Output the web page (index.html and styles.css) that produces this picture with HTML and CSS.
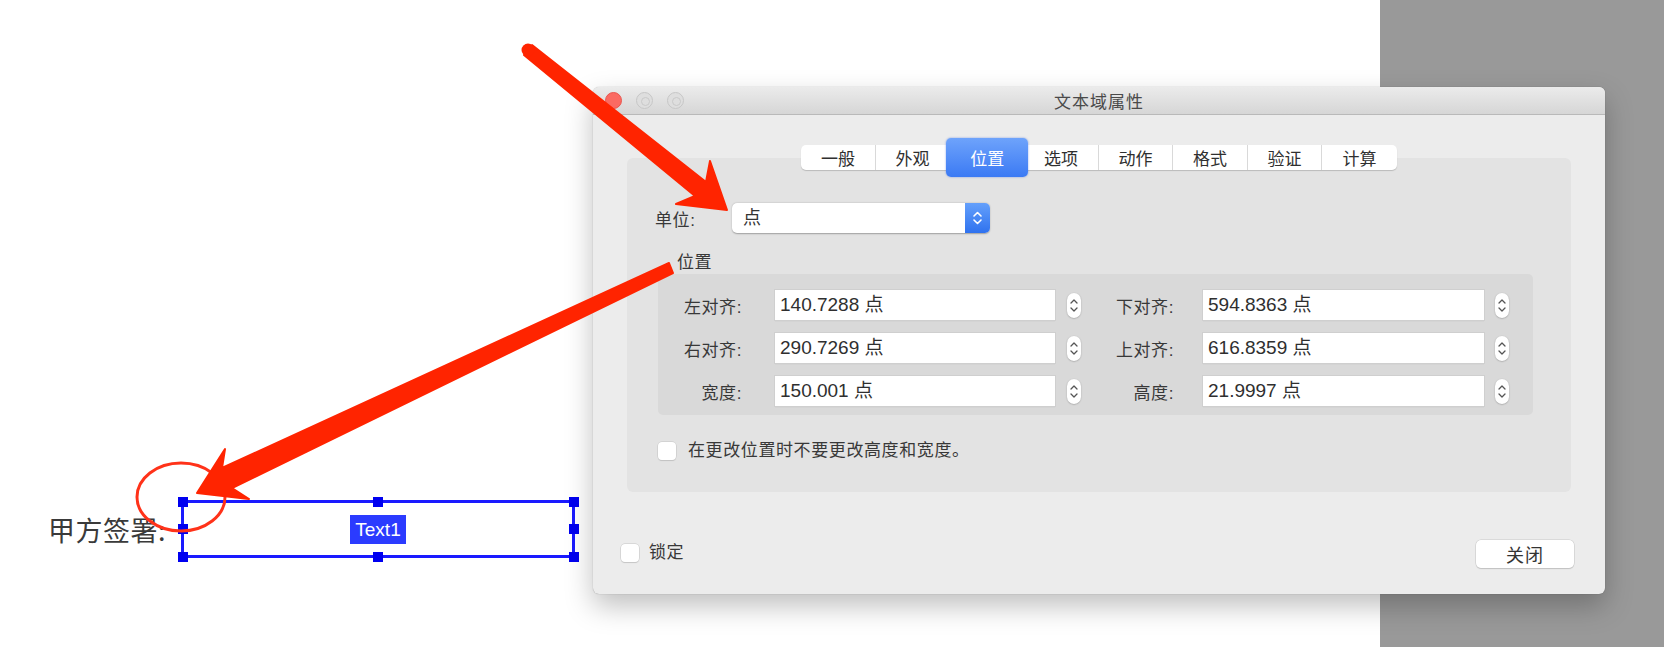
FILE: index.html
```html
<!DOCTYPE html>
<html lang="zh-CN">
<head>
    <meta charset="UTF-8">
    <meta name="viewport" content="width=device-width, initial-scale=1.0">
    <title>文本域属性</title>
    <link rel="stylesheet" href="styles.css">
</head>
<body>
    <div class="desktop">
        <!-- PDF page with the form field -->
        <div class="doc">
            <div class="sign-row">
                <span class="sign-label">甲方签署:</span>
                <div class="text-field">
                    <span class="field-name">Text1</span>
                    <i class="handle tl"></i>
                    <i class="handle tm"></i>
                    <i class="handle tr"></i>
                    <i class="handle ml"></i>
                    <i class="handle mr"></i>
                    <i class="handle bl"></i>
                    <i class="handle bm"></i>
                    <i class="handle br"></i>
                </div>
            </div>
        </div>
        <div class="backdrop"></div>
    </div>

    <!-- Properties window -->
    <div class="dialog">
        <div class="titlebar">
            <div class="lights">
                <span class="light red"></span>
                <span class="light"></span>
                <span class="light"></span>
            </div>
            <div class="title">文本域属性</div>
            <div></div>
        </div>

        <div class="dialog-body">
            <div class="tabs">
                <span class="tab">一般</span>
                <span class="tab">外观</span>
                <span class="tab active">位置</span>
                <span class="tab">选项</span>
                <span class="tab">动作</span>
                <span class="tab">格式</span>
                <span class="tab">验证</span>
                <span class="tab last">计算</span>
            </div>

            <div class="panel">
                <div class="unit-row">
                    <span class="unit-label">单位:</span>
                    <div class="select">
                        <span class="select-value">点</span>
                        <span class="select-btn">
                            <svg width="25" height="30" viewBox="0 0 25 30"><path d="M9 13 L12.5 9.5 L16 13 M9 17 L12.5 20.5 L16 17" fill="none" stroke="#fff" stroke-width="1.6" stroke-linecap="round" stroke-linejoin="round"/></svg>
                        </span>
                    </div>
                </div>

                <div class="group-title">位置</div>
                <div class="group">
                    <div class="field-row">
                        <div class="field">
                            <span class="field-label">左对齐:</span>
                            <div class="input">140.7288 点</div>
                            <span class="stepper"><svg width="14" height="25" viewBox="0 0 14 25"><path d="M4 10 L7 7 L10 10 M4 15 L7 18 L10 15" fill="none" stroke="#555" stroke-width="1.3" stroke-linecap="round" stroke-linejoin="round"/></svg></span>
                        </div>
                        <div class="field right">
                            <span class="field-label">下对齐:</span>
                            <div class="input">594.8363 点</div>
                            <span class="stepper"><svg width="14" height="25" viewBox="0 0 14 25"><path d="M4 10 L7 7 L10 10 M4 15 L7 18 L10 15" fill="none" stroke="#555" stroke-width="1.3" stroke-linecap="round" stroke-linejoin="round"/></svg></span>
                        </div>
                    </div>
                    <div class="field-row">
                        <div class="field">
                            <span class="field-label">右对齐:</span>
                            <div class="input">290.7269 点</div>
                            <span class="stepper"><svg width="14" height="25" viewBox="0 0 14 25"><path d="M4 10 L7 7 L10 10 M4 15 L7 18 L10 15" fill="none" stroke="#555" stroke-width="1.3" stroke-linecap="round" stroke-linejoin="round"/></svg></span>
                        </div>
                        <div class="field right">
                            <span class="field-label">上对齐:</span>
                            <div class="input">616.8359 点</div>
                            <span class="stepper"><svg width="14" height="25" viewBox="0 0 14 25"><path d="M4 10 L7 7 L10 10 M4 15 L7 18 L10 15" fill="none" stroke="#555" stroke-width="1.3" stroke-linecap="round" stroke-linejoin="round"/></svg></span>
                        </div>
                    </div>
                    <div class="field-row">
                        <div class="field">
                            <span class="field-label">宽度:</span>
                            <div class="input">150.001 点</div>
                            <span class="stepper"><svg width="14" height="25" viewBox="0 0 14 25"><path d="M4 10 L7 7 L10 10 M4 15 L7 18 L10 15" fill="none" stroke="#555" stroke-width="1.3" stroke-linecap="round" stroke-linejoin="round"/></svg></span>
                        </div>
                        <div class="field right">
                            <span class="field-label">高度:</span>
                            <div class="input">21.9997 点</div>
                            <span class="stepper"><svg width="14" height="25" viewBox="0 0 14 25"><path d="M4 10 L7 7 L10 10 M4 15 L7 18 L10 15" fill="none" stroke="#555" stroke-width="1.3" stroke-linecap="round" stroke-linejoin="round"/></svg></span>
                        </div>
                    </div>
                </div>

                <label class="check-row">
                    <span class="checkbox"></span>
                    <span>在更改位置时不要更改高度和宽度。</span>
                </label>
            </div>

            <div class="footer">
                <label class="check-row lock">
                    <span class="checkbox"></span>
                    <span>锁定</span>
                </label>
                <button class="btn">关闭</button>
            </div>
        </div>
    </div>

    <!-- Annotations drawn on top of the screenshot -->
    <svg class="marks" width="1664" height="647" viewBox="0 0 1664 647">
        <ellipse cx="181" cy="497" rx="44" ry="34" fill="none" stroke="#ff3219" stroke-width="3"/>
        <polygon points="524,55 695,196 676,204 727,210 710,161 706,182 532,45" fill="#ff2400" stroke="#ff2400" stroke-width="2" stroke-linejoin="round"/>
        <circle cx="528" cy="50" r="6.5" fill="#ff2400"/>
        <polygon points="673,273 232,488 249,499 197,493 225,449 222,468 669,263" fill="#ff2400" stroke="#ff2400" stroke-width="2" stroke-linejoin="round"/>
    </svg>
</body>
</html>
```

FILE: styles.css
```css
/* Global */
* {
    box-sizing: border-box;
}

html, body {
    margin: 0;
    padding: 0;
}

body {
    font-family: "Liberation Sans", "Noto Sans CJK SC", sans-serif;
    color: #333;
    width: 1664px;
    height: 647px;
    overflow: hidden;
    position: relative;
}

.desktop {
    display: flex;
    height: 647px;
}

/* Document page */
.doc {
    flex: 1;
    background: #fff;
    padding: 500px 0 0 48px;
}

.backdrop {
    width: 284px;
    background: #999;
}

.sign-row {
    display: flex;
    align-items: center;
}

.sign-label {
    width: 133px;
    font-size: 27px;
    letter-spacing: 0.5px;
    color: #3a3a3a;
    font-family: "Noto Sans CJK SC", sans-serif;
}

.text-field {
    position: relative;
    width: 394px;
    height: 58px;
    border: 3px solid #1a1aff;
    display: flex;
    align-items: center;
    justify-content: center;
}

.field-name {
    background: #2b3bff;
    color: #fff;
    font-size: 19px;
    line-height: 29px;
    padding: 0 5px;
}

.handle {
    position: absolute;
    width: 10px;
    height: 10px;
    background: #0000f0;
}

.handle.tl { left: -6.5px; top: -6.5px; }
.handle.tm { left: calc(50% - 5px); top: -6.5px; }
.handle.tr { right: -6.5px; top: -6.5px; }
.handle.ml { left: -6.5px; top: calc(50% - 5px); }
.handle.mr { right: -6.5px; top: calc(50% - 5px); }
.handle.bl { left: -6.5px; bottom: -6.5px; }
.handle.bm { left: calc(50% - 5px); bottom: -6.5px; }
.handle.br { right: -6.5px; bottom: -6.5px; }

/* Window */
.dialog {
    position: absolute;
    left: 593px;
    top: 87px;
    width: 1012px;
    background: #ececec;
    border-radius: 6px;
    overflow: hidden;
    box-shadow: 0 12px 28px rgba(0, 0, 0, 0.25), 0 0 1px rgba(0, 0, 0, 0.4);
}

.titlebar {
    height: 28px;
    display: grid;
    grid-template-columns: 1fr auto 1fr;
    align-items: center;
    padding: 0 12px;
    background: linear-gradient(#ebebeb, #d6d6d6);
    border-bottom: 1px solid #b9b9b9;
}

.lights {
    display: flex;
    gap: 14px;
}

.light {
    position: relative;
    width: 17px;
    height: 17px;
    border-radius: 50%;
    background: #dedede;
    border: 1px solid #c6c6c6;
}

.light::after {
    content: "";
    position: absolute;
    left: 4px;
    top: 4px;
    width: 7px;
    height: 7px;
    border-radius: 50%;
    border: 1px solid #c9c9c9;
}

.light.red {
    background: #fb6a62;
    border-color: #e8564f;
}

.light.red::after {
    display: none;
}

.title {
    font-size: 17px;
    color: #4a4a4a;
    letter-spacing: 1px;
}

.dialog-body {
    padding: 30px 34px 26px;
}

/* Tabs */
.tabs {
    position: relative;
    z-index: 1;
    display: flex;
    width: max-content;
    height: 25px;
    margin: 0 auto -12px;
    background: #fff;
    border-radius: 5px;
    box-shadow: 0 1px 1px rgba(0, 0, 0, 0.18);
}

.tab {
    width: 74.5px;
    display: flex;
    align-items: center;
    justify-content: center;
    font-size: 17px;
    color: #2f2f2f;
    border-right: 1px solid #d9d9d9;
}

.tab.last {
    border-right: none;
}

.tab.active {
    width: 82px;
    margin: -7px -4px -7px -4px;
    border: none;
    border-radius: 5px;
    color: #fff;
    background: linear-gradient(#6ea3fb, #3b7af4);
    box-shadow: 0 0 2px rgba(40, 90, 220, 0.6);
}

/* Content panel */
.panel {
    background: #e3e3e3;
    border-radius: 6px;
    padding: 45px 38px 31px 28px;
}

.unit-row {
    display: flex;
    align-items: center;
    height: 30px;
}

.unit-label,
.field-label,
.group-title,
.check-row {
    font-size: 17px;
    color: #383838;
    letter-spacing: 0.6px;
}

.unit-label {
    width: 77px;
}

.select {
    display: flex;
    width: 258px;
    height: 30px;
    background: #fff;
    border-radius: 5px;
    box-shadow: 0 0.5px 1.5px rgba(0, 0, 0, 0.3);
    overflow: hidden;
}

.select-value {
    flex: 1;
    padding-left: 11px;
    font-size: 18px;
    line-height: 30px;
}

.select-btn {
    width: 25px;
    background: linear-gradient(#64a0fb, #2f72ef);
}

.select-btn svg {
    display: block;
}

.group-title {
    margin: 20px 0 0 22px;
    line-height: 20px;
}

.group {
    margin: 1px 0 0 3px;
    background: #d9d9d9;
    border-radius: 5px;
    padding: 16px 0 9px;
    display: flex;
    flex-direction: column;
    gap: 13px;
}

.field-row {
    display: flex;
}

.field {
    display: flex;
    align-items: center;
    height: 30px;
}

.field-label {
    width: 84px;
    text-align: right;
}

.field.right .field-label {
    width: 93px;
}

.input {
    width: 280px;
    height: 30px;
    margin-left: 33px;
    padding-left: 5px;
    background: #fff;
    font-size: 19px;
    line-height: 30px;
    color: #2f2f2f;
    box-shadow: 0 0 0 1px #cfcfcf, 0 1px 1px rgba(0, 0, 0, 0.12);
}

.field.right .input {
    width: 281px;
    margin-left: 29px;
}

.stepper {
    width: 14px;
    height: 25px;
    margin-left: 12px;
    background: #fff;
    border-radius: 7px;
    box-shadow: 0 0.5px 1.5px rgba(0, 0, 0, 0.3);
}

.field.right .stepper {
    margin-left: 11px;
}

.stepper svg {
    display: block;
}

/* Checkboxes */
.check-row {
    display: flex;
    align-items: center;
    gap: 12px;
    margin: 26px 0 0 3px;
    line-height: 20px;
}

.checkbox {
    width: 18px;
    height: 18px;
    background: #fff;
    border-radius: 4px;
    box-shadow: 0 0 0 0.5px #c4c4c4, 0 1px 1px rgba(0, 0, 0, 0.15);
}

/* Footer */
.footer {
    display: flex;
    justify-content: space-between;
    align-items: center;
    margin: 48px -3px 0 -6px;
    height: 28px;
}

.check-row.lock {
    margin: -3px 0 0 0;
    gap: 10px;
}

.btn {
    width: 98px;
    height: 28px;
    border: none;
    border-radius: 5px;
    background: #fff;
    font-family: "Noto Sans CJK SC", sans-serif;
    font-size: 18px;
    color: #333;
    letter-spacing: 1px;
    box-shadow: 0 0 0 0.5px #c8c8c8, 0 1px 1px rgba(0, 0, 0, 0.2);
}

/* Red annotations */
.marks {
    position: absolute;
    left: 0;
    top: 0;
    z-index: 10;
    pointer-events: none;
}
```
